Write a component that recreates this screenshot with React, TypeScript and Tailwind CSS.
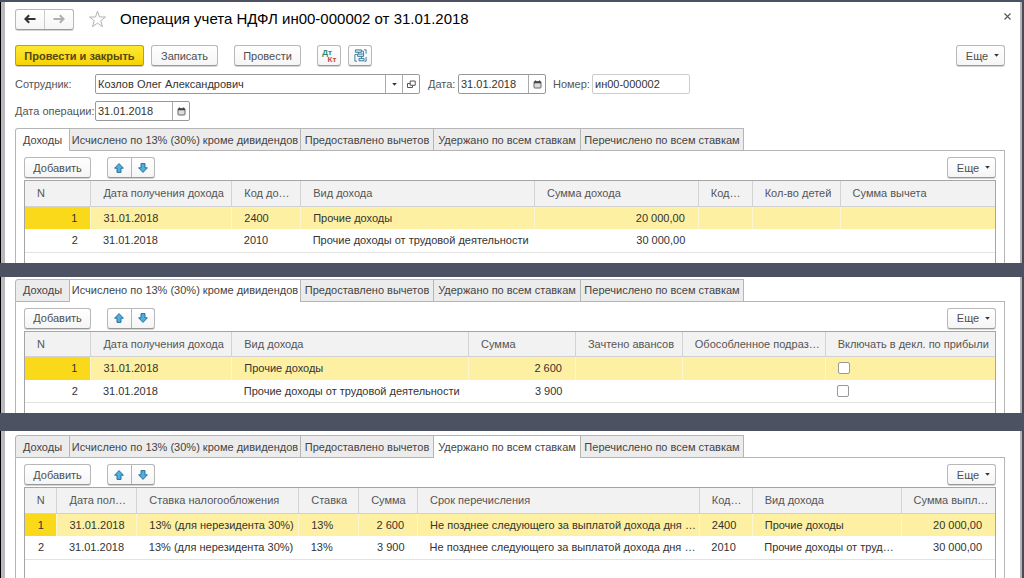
import type { ReactNode } from "react";

type Cell = string | { check: string };
type Align = "left" | "right" | "center";
type Column = { title: string; width: number; align?: Align };
type Sheet = { id: string; active: number; columns: Column[]; rows: Cell[][] };

const TABS = [
  "Доходы",
  "Исчислено по 13% (30%) кроме дивидендов",
  "Предоставлено вычетов",
  "Удержано по всем ставкам",
  "Перечислено по всем ставкам",
];

const TAB_WIDTHS = ["w-[55px]", "w-[231px]", "w-[133px]", "w-[147px]", "w-[163px]"];

const INCOME: Sheet = {
  id: "income",
  active: 0,
  columns: [
    { title: "N", width: 66, align: "right" },
    { title: "Дата получения дохода", width: 141 },
    { title: "Код до…", width: 69 },
    { title: "Вид дохода", width: 234 },
    { title: "Сумма дохода", width: 164, align: "right" },
    { title: "Код…", width: 54 },
    { title: "Кол-во детей", width: 88 },
    { title: "Сумма вычета", width: 155 },
  ],
  rows: [
    ["1", "31.01.2018", "2400", "Прочие доходы", "20 000,00", "", "", ""],
    ["2", "31.01.2018", "2010", "Прочие доходы от трудовой деятельности", "30 000,00", "", "", ""],
  ],
};

const CALCULATED: Sheet = {
  id: "calculated",
  active: 1,
  columns: [
    { title: "N", width: 66, align: "right" },
    { title: "Дата получения дохода", width: 141 },
    { title: "Вид дохода", width: 237 },
    { title: "Сумма", width: 107, align: "right" },
    { title: "Зачтено авансов", width: 107 },
    { title: "Обособленное подраз…", width: 143 },
    { title: "Включать в декл. по прибыли", width: 170 },
  ],
  rows: [
    ["1", "31.01.2018", "Прочие доходы", "2 600", "", "", { check: "Включать в декларацию, строка 1" }],
    ["2", "31.01.2018", "Прочие доходы от трудовой деятельности", "3 900", "", "", { check: "Включать в декларацию, строка 2" }],
  ],
};

const WITHHELD: Sheet = {
  id: "withheld",
  active: 3,
  columns: [
    { title: "N", width: 32, align: "center" },
    { title: "Дата пол…", width: 80 },
    { title: "Ставка налогообложения", width: 162 },
    { title: "Ставка", width: 60 },
    { title: "Сумма", width: 59, align: "right" },
    { title: "Срок перечисления", width: 282 },
    { title: "Код…", width: 53 },
    { title: "Вид дохода", width: 149 },
    { title: "Сумма выпл…", width: 94, align: "right" },
  ],
  rows: [
    ["1", "31.01.2018", "13% (для нерезидента 30%)", "13%", "2 600", "Не позднее следующего за выплатой дохода дня …", "2400", "Прочие доходы", "20 000,00"],
    ["2", "31.01.2018", "13% (для нерезидента 30%)", "13%", "3 900", "Не позднее следующего за выплатой дохода дня …", "2010", "Прочие доходы от труд…", "30 000,00"],
  ],
};

const BTN =
  "flex h-[21px] items-center justify-center rounded-[3px] border border-[#b8b8b8] border-b-[#999] bg-linear-to-b from-white to-[#f5f5f5] text-[#4f4f4f] shadow-[0_1px_0_#d4d4d4]";

function Caret() {
  return (
    <svg viewBox="0 0 5 3" className="h-[3px] w-[5px]" aria-hidden="true">
      <path d="M.2 0h4.6L2.5 2.7z" fill="#333" />
    </svg>
  );
}

function MoreButton() {
  return (
    <button type="button" className={`${BTN} w-[49px] gap-1.5 pl-1`}>
      Еще
      <Caret />
    </button>
  );
}

function NavArrow({ color, flip }: { color: string; flip?: boolean }) {
  return (
    <svg viewBox="0 0 12 10" className={flip ? "h-2.5 w-3 rotate-180" : "h-2.5 w-3"} fill="none" aria-hidden="true">
      <path d="M1.2 5H11.5M5.2 1.2 1.4 5l3.8 3.8" stroke={color} strokeWidth="2" />
    </svg>
  );
}

function MoveArrow({ down }: { down?: boolean }) {
  return (
    <svg viewBox="0 0 10 10" className={down ? "h-2.5 w-2.5 rotate-180" : "h-2.5 w-2.5"} aria-hidden="true">
      <path d="M5 .6 9.4 5.2H7V9.4H3V5.2H.6z" fill="#4fb0e0" stroke="#2c7096" strokeWidth="1" strokeLinejoin="round" />
    </svg>
  );
}

function CalendarIcon() {
  return (
    <svg viewBox="0 0 9 9" className="h-[9px] w-[9px]" aria-hidden="true">
      <rect x="1" y="1.5" width="7" height="6.5" rx=".8" fill="#dcdcdc" stroke="#666" />
      <path d="M1 2.5h7M2.5.5v2M6.5.5v2" stroke="#444" strokeWidth="1.3" />
    </svg>
  );
}

function OpenIcon() {
  return (
    <svg viewBox="0 0 9 9" className="h-[9px] w-[9px]" fill="#fff" stroke="#555" aria-hidden="true">
      <path d="M.5 3.5h5v4h-5z" />
      <path d="M3.2 1h5v4.3h-5z" />
    </svg>
  );
}

function StructureIcon() {
  return (
    <svg viewBox="0 0 13 13" className="h-[13px] w-[13px]" fill="none" stroke="#3f7f9f" aria-hidden="true">
      <path d="M2.8 5.5H.9v6.7h2M10 .8h2.1v4M12.1 8v4.2H10.5" />
      <path d="M1.4.9h6v2.4h-6zM3.6 5h6v2.4h-6zM5 9.4h5v2.4H5z" fill="#d3e8f1" />
      <path d="M4.5 3.3V5M7.4 2.1h2V5M7.5 7.4v2" />
    </svg>
  );
}

function Field({
  id,
  label,
  value,
  labelClass = "",
  boxClass,
  frame = "border-[#999]",
  children,
}: {
  id: string;
  label: string;
  value: string;
  labelClass?: string;
  boxClass: string;
  frame?: string;
  children?: ReactNode;
}) {
  return (
    <div className="flex items-center">
      <label htmlFor={id} className={`shrink-0 whitespace-nowrap text-[#555] ${labelClass}`}>
        {label}
      </label>
      <div className={`flex h-5 rounded-[2px] border bg-white ${frame} ${boxClass}`}>
        <input id={id} defaultValue={value} className="min-w-0 flex-1 px-0.5 text-[#333] outline-none" />
        {children}
      </div>
    </div>
  );
}

function FieldButton({ label, children }: { label: string; children: ReactNode }) {
  return (
    <button type="button" aria-label={label} className="flex w-[17px] items-center justify-center border-l border-[#aaa]">
      {children}
    </button>
  );
}

function alignOf(align?: Align) {
  if (align === "right") return "text-right pr-[13px]";
  if (align === "center") return "text-center";
  return "text-left pl-3";
}

function DataTable({ sheet }: { sheet: Sheet }) {
  const total = sheet.columns.reduce((sum, c) => sum + c.width, 0);
  return (
    <table className="w-full table-fixed border-collapse">
      <colgroup>
        {sheet.columns.map((c, i) => (
          <col key={i} style={{ width: `${(c.width / total) * 100}%` }} />
        ))}
      </colgroup>
      <thead>
        <tr className="h-[25px] bg-[#f2f2f2]">
          {sheet.columns.map((c, i) => (
            <th
              key={i}
              scope="col"
              className={`overflow-hidden border-r border-b border-[#d2d2d2] p-0 font-normal whitespace-nowrap text-[#555] last:border-r-0 ${
                c.align === "center" ? "text-center" : "pl-3 text-left"
              }`}
            >
              {c.title}
            </th>
          ))}
        </tr>
      </thead>
      <tbody>
        {sheet.rows.map((row, r) => (
          <tr key={r} className={r === 0 ? "h-[23px] bg-[#fdf0a2]" : "h-[23px] border-b border-[#e2e2e2]"}>
            {row.map((cell, i) => (
              <td
                key={i}
                className={`overflow-hidden p-0 whitespace-nowrap text-[#333] ${alignOf(sheet.columns[i].align)} ${
                  r === 0 ? "border-r border-[#fbf6cf] last:border-r-0" : ""
                } ${r === 0 && i === 0 ? "bg-[#fad91b]" : ""}`}
              >
                {typeof cell === "string" ? (
                  cell
                ) : (
                  <input
                    type="checkbox"
                    aria-label={cell.check}
                    className="block h-3 w-3 appearance-none rounded-[2px] border border-[#999] bg-white"
                  />
                )}
              </td>
            ))}
          </tr>
        ))}
      </tbody>
    </table>
  );
}

function TabbedSheet({ sheet }: { sheet: Sheet }) {
  return (
    <div className="flex flex-1 flex-col">
      <div role="tablist" className="flex">
        {TABS.map((tab, i) => (
          <button
            key={tab}
            type="button"
            role="tab"
            aria-selected={i === sheet.active}
            className={`h-[23px] border-t border-r border-[#b5b5b5] text-center whitespace-nowrap text-[#444] first:rounded-tl-[3px] first:border-l last:rounded-tr-[3px] ${TAB_WIDTHS[i]} ${
              i === sheet.active ? "bg-white pb-px" : "border-b bg-[#ececec]"
            }`}
          >
            {tab}
          </button>
        ))}
        <div className="flex-1 border-b border-[#b5b5b5]" />
      </div>
      <div className="flex flex-1 flex-col border-x border-[#b5b5b5] px-2 pt-1.5">
        <div className="flex items-center pb-0.5">
          <button type="button" className={`${BTN} w-[67px]`}>
            Добавить
          </button>
          <div className={`${BTN} ml-4 w-12`}>
            <button type="button" aria-label="Переместить вверх" className="flex h-full flex-1 items-center justify-center border-r border-[#b4b4b4]">
              <MoveArrow />
            </button>
            <button type="button" aria-label="Переместить вниз" className="flex h-full flex-1 items-center justify-center">
              <MoveArrow down />
            </button>
          </div>
          <div className="ml-auto">
            <MoreButton />
          </div>
        </div>
        <div className="flex-1 border border-b-0 border-[#a5a5a5] pb-2.5">
          <DataTable sheet={sheet} />
        </div>
      </div>
    </div>
  );
}

function Frame({ grow, children }: { grow?: boolean; children: ReactNode }) {
  return (
    <section className={`flex border-r-2 border-l border-r-[#4a4b52] border-l-black bg-white ${grow ? "flex-1" : ""}`}>
      <div className="flex min-w-0 flex-1 flex-col border-r-2 border-l-4 border-r-[#b5b5b9] border-l-[#b9b9be] pr-[15px] pl-2.5">
        {children}
      </div>
    </section>
  );
}

export default function App() {
  return (
    <main className="flex min-h-screen flex-col bg-[#4d5263] pt-0.5 font-['Liberation_Sans',Arial,sans-serif] text-[11px] leading-[14px]">
      <Frame>
        <header className="flex h-[34px] items-center">
          <div className={`${BTN} w-[59px]`}>
            <button type="button" aria-label="Назад" className="flex h-full flex-1 items-center justify-center border-r border-[#ccc]">
              <NavArrow color="#333" />
            </button>
            <button type="button" aria-label="Вперед" className="flex h-full flex-1 items-center justify-center">
              <NavArrow color="#b0b0b0" flip />
            </button>
          </div>
          <button type="button" aria-label="В избранное" className="ml-3.5">
            <svg viewBox="0 0 19 18" className="h-[18px] w-[19px]" aria-hidden="true">
              <path
                d="M9.5 1.2 11.5 7h6l-4.8 3.7 1.8 6-5-3.6-5 3.6 1.8-6L1.5 7h6z"
                fill="#fff"
                stroke="#b3b3b3"
              />
            </svg>
          </button>
          <h1 className="ml-[13px] text-[15px] leading-5 whitespace-nowrap text-black">
            Операция учета НДФЛ ин00-000002 от 31.01.2018
          </h1>
          <button type="button" aria-label="Закрыть" className="-mr-2.5 ml-auto flex h-7 w-4 items-center justify-center self-start">
            <svg viewBox="0 0 7 7" className="h-[7px] w-[7px]" stroke="#555" strokeWidth="1.1" aria-hidden="true">
              <path d="M.5.5l6 6M6.5.5l-6 6" />
            </svg>
          </button>
        </header>

        <div className="flex items-center pt-[9px]">
          <button
            type="button"
            className="h-[21px] w-[129px] rounded-[3px] border border-[#c2a200] border-b-[#9c8200] bg-linear-to-b from-[#fde92e] to-[#f6d300] font-bold text-[#54490f] shadow-[0_1px_0_#cfcfcf]"
          >
            Провести и закрыть
          </button>
          <button type="button" className={`${BTN} ml-[7px] w-[67px]`}>
            Записать
          </button>
          <button type="button" className={`${BTN} ml-4 w-[67px]`}>
            Провести
          </button>
          <button type="button" aria-label="Дебет и кредит" className={`${BTN} ml-4 w-6 flex-col text-[8px] leading-[7px] font-bold`}>
            <span className="mr-1 text-[#2b8a6b]">Дт</span>
            <span className="ml-1.5 text-[#c0484c]">Кт</span>
          </button>
          <button type="button" aria-label="Структура подчиненности" className={`${BTN} ml-[7px] w-6`}>
            <StructureIcon />
          </button>
          <div className="ml-auto">
            <MoreButton />
          </div>
        </div>

        <div className="flex items-center pt-2">
          <Field id="employee" label="Сотрудник:" value="Козлов Олег Александрович" labelClass="w-20" boxClass="w-[325px]">
            <FieldButton label="Выбрать из списка">
              <Caret />
            </FieldButton>
            <FieldButton label="Открыть карточку">
              <OpenIcon />
            </FieldButton>
          </Field>
          <Field id="date" label="Дата:" value="31.01.2018" labelClass="w-[38px] pl-2" boxClass="w-[88px]">
            <FieldButton label="Календарь">
              <CalendarIcon />
            </FieldButton>
          </Field>
          <Field id="number" label="Номер:" value="ин00-000002" labelClass="w-[46px] pl-[7px]" boxClass="w-[98px]" frame="border-[#ccc]" />
        </div>
        <div className="pt-[7px] pb-[7px]">
          <Field id="operation-date" label="Дата операции:" value="31.01.2018" labelClass="w-20" boxClass="w-[95px]">
            <FieldButton label="Календарь">
              <CalendarIcon />
            </FieldButton>
          </Field>
        </div>
        <TabbedSheet sheet={INCOME} />
      </Frame>

      <div className="h-3.5" />

      <Frame>
        <div className="flex flex-1 pt-0.5">
          <TabbedSheet sheet={CALCULATED} />
        </div>
      </Frame>

      <div className="h-[18px]" />

      <Frame grow>
        <div className="flex flex-1 pt-1">
          <TabbedSheet sheet={WITHHELD} />
        </div>
      </Frame>
    </main>
  );
}
